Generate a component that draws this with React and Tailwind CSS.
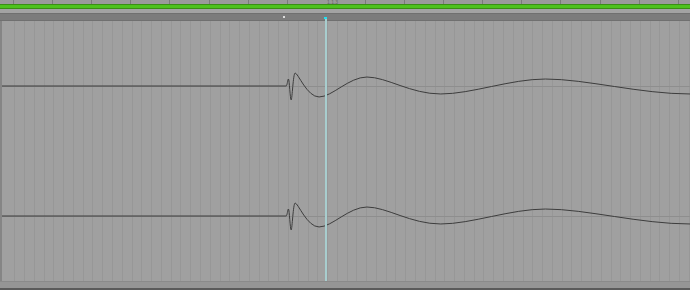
import React from "react";

const TICKS = Array.from({ length: 18 }, (_, i) => 13 + i * 39.1).filter((x) => Math.abs(x - 326) > 10);

// one channel of the clip, drawn around a zero line
const WAVE =
  "M0,0 L285,0 C286,0 286.5,-7 287.3,-7 C288.2,-7 289,14 290,14 C291,14 292,-13 294,-13 C297,-13 306,11 318,11 C331,11 348,-9 366,-9 C386,-9 410,8 440,8 C471,8 510,-7 545,-7 C586,-7 640,8 690,8";

function Channel() {
  return (
    <div className="relative flex-1 flex items-center">
      <div className="absolute left-0 right-0 top-1/2 h-px bg-[#8e8e8e]" />
      <svg width="690" height="60" viewBox="0 -30 690 60" className="relative block">
        <path d={WAVE} fill="none" stroke="#3c3c3c" strokeWidth="1" />
      </svg>
    </div>
  );
}

export default function App() {
  return (
    <div className="w-[690px] h-[290px] bg-[#a0a0a0] flex flex-col relative overflow-hidden font-['Liberation_Sans',sans-serif]">
      {/* ruler */}
      <div className="relative h-[4px] bg-[#9a9a9a]">
        {TICKS.map((x) => (
          <div key={x} className="absolute top-0 h-[4px] w-px bg-[#7a7a7a]" style={{ left: x }} />
        ))}
        <span className="absolute left-[327px] top-0 text-[5px] leading-[4px] text-[#666]">1.1.3</span>
      </div>
      {/* clip strip */}
      <div className="h-[5px] bg-[#4dc21c] border-y border-[#3a8f14]" />
      <div className="h-[4px] bg-[#a3a3a3]" />
      <div className="relative h-[8px] bg-[#7c7c7c] border-y border-[#707070]">
        <div className="absolute left-[283px] top-[2px] w-[2px] h-[2px] bg-[#dcdcdc]" />
        <div className="absolute left-[324px] top-[3px] w-[3px] h-[2px] bg-[#22e0f0]" />
      </div>
      {/* tracks */}
      <div className="flex-1 flex flex-col border-l-2 border-[#858585] bg-[repeating-linear-gradient(90deg,transparent_0px,transparent_2.5px,#979797_2.5px,#979797_3.5px,transparent_3.5px,transparent_9.775px)]">
        <Channel />
        <Channel />
      </div>
      <div className="h-[7px] bg-[#959595] border-t border-[#8a8a8a]" />
      <div className="h-[2px] bg-[#5a5a5a]" />
      {/* playhead */}
      <div className="absolute left-[325px] top-[19px] bottom-[9px] w-[2px] bg-[#a8cdce]" />
    </div>
  );
}
